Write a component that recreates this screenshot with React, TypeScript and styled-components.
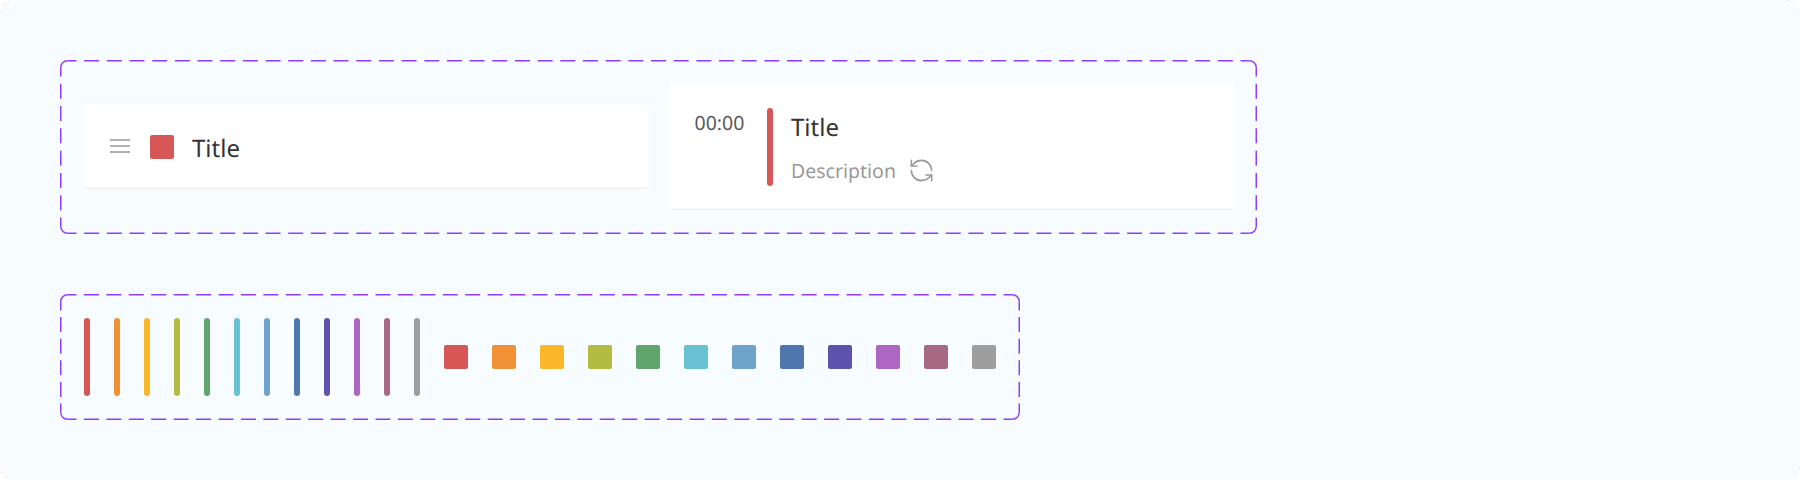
import styled, { createGlobalStyle } from "styled-components";
import { RefreshCcw } from "lucide-react";

const palette = [
  "#d75656",
  "#f09135",
  "#fab727",
  "#b4bb41",
  "#60a56c",
  "#67c1d3",
  "#70a3ca",
  "#5077ad",
  "#5f52ae",
  "#ad66c4",
  "#a86a82",
  "#9e9e9e",
];

const GlobalStyle = createGlobalStyle`
  html, body {
    margin: 0;
    padding: 0;
    background: #ffffff;
    font-family: "Noto Sans", "Open Sans", sans-serif;
    text-rendering: geometricPrecision;
  }
`;

const Page = styled.div`
  position: relative;
  box-sizing: border-box;
  width: 1800px;
  height: 480px;
  padding: 60px;
  display: flex;
  flex-direction: column;
  align-items: flex-start;
  gap: 60px;
  background: #f6fcff;
  border-radius: 15px;
  overflow: hidden;
`;

const Outline = styled.svg`
  position: absolute;
  inset: 0;
  width: 100%;
  height: 100%;
  pointer-events: none;
`;

const DashedBox = styled.div`
  position: relative;
  box-sizing: border-box;
  padding: 24px;
  display: flex;
  align-items: center;
  gap: 24px;
`;

const CardBox = styled(DashedBox)`
  width: 1197px;
`;

const SwatchBox = styled(DashedBox)`
  width: 960px;
`;

const Card = styled.div`
  flex: 1;
  box-sizing: border-box;
  display: flex;
  background: #ffffff;
  padding: 24px;
  box-shadow: inset 0 -1.5px 0 #f0f0f0;
`;

const RowCard = styled(Card)`
  align-items: center;
  height: 84px;
  gap: 18px;
`;

const EventCard = styled(Card)`
  height: 126px;
`;

const MenuIcon = styled.svg`
  display: block;
  width: 24px;
  height: 24px;
  flex: none;
`;

const Swatch = styled.div<{ $color: string }>`
  width: 24px;
  height: 24px;
  flex: none;
  border-radius: 2px;
  background: ${(p) => p.$color};
`;

const Bar = styled.div<{ $color: string }>`
  width: 6px;
  height: 78px;
  flex: none;
  border-radius: 3px;
  background: ${(p) => p.$color};
`;

const RowTitle = styled.div`
  font-size: 24px;
  line-height: 36px;
  color: #333333;
  padding-top: 4px;
`;

const EventTitle = styled(RowTitle)`
  padding-top: 1px;
  margin-top: 1px;
`;

const Time = styled.div`
  width: 72.5px;
  flex: none;
  font-size: 19.5px;
  line-height: 24px;
  padding-top: 3px;
  color: #595959;
`;

const Body = styled.div`
  display: flex;
  flex-direction: column;
  justify-content: space-between;
  margin-left: 18px;
`;

const Meta = styled.div`
  display: flex;
  align-items: center;
  gap: 12px;
  height: 30px;
  margin-bottom: 1px;
  font-size: 19.5px;
  color: #999999;
`;

const DASH = 15;
const GAP = 7.5;
const RADIUS = 7.5;
const EDGE = 0.75;

// every side fits its dashes between the corners, so each corner gets a full dash
const sideDash = (length: number) => {
  const run = length - 3;
  const period = (run - DASH) / Math.round((run - DASH) / (DASH + GAP));
  return `${DASH} ${period - DASH}`;
};

const Dashes = ({ w, h }: { w: number; h: number }) => {
  const right = w - EDGE;
  const bottom = h - EDGE;
  const line = { fill: "none", stroke: "#8f3dff", strokeWidth: 1.5 };
  const across = { ...line, strokeDasharray: sideDash(w), strokeDashoffset: 6 };
  const down = { ...line, strokeDasharray: sideDash(h), strokeDashoffset: 6 };
  return (
    <Outline>
      <path {...line} d={`M${EDGE} ${RADIUS}A${RADIUS - EDGE} ${RADIUS - EDGE} 0 0 1 ${RADIUS} ${EDGE}`} />
      <path {...line} d={`M${w - RADIUS} ${EDGE}A${RADIUS - EDGE} ${RADIUS - EDGE} 0 0 1 ${right} ${RADIUS}`} />
      <path {...line} d={`M${right} ${h - RADIUS}A${RADIUS - EDGE} ${RADIUS - EDGE} 0 0 1 ${w - RADIUS} ${bottom}`} />
      <path {...line} d={`M${RADIUS} ${bottom}A${RADIUS - EDGE} ${RADIUS - EDGE} 0 0 1 ${EDGE} ${h - RADIUS}`} />
      <path {...across} d={`M${RADIUS} ${EDGE}H${w - RADIUS}`} />
      <path {...across} d={`M${RADIUS} ${bottom}H${w - RADIUS}`} />
      <path {...down} d={`M${EDGE} ${RADIUS}V${h - RADIUS}`} />
      <path {...down} d={`M${right} ${RADIUS}V${h - RADIUS}`} />
    </Outline>
  );
};

// the frame's own dashed outline only peeks in at the rounded corners
const FrameEdge = () => (
  <Outline>
    <rect
      x="-1"
      y="-1"
      width="1802"
      height="482"
      rx="17"
      fill="none"
      stroke="#9747ff"
      strokeOpacity="0.5"
      strokeWidth="1.5"
      strokeDasharray="3 4"
    />
  </Outline>
);

export default function App() {
  return (
    <>
      <GlobalStyle />
      <Page>
        <FrameEdge />
        <CardBox>
          <Dashes w={1197} h={174} />
          <RowCard>
            <MenuIcon viewBox="0 0 24 24" fill="none" stroke="#999999" strokeWidth="1.5">
              <path d="M2 5h20M2 11h20M2 17h20" />
            </MenuIcon>
            <Swatch $color={palette[0]} />
            <RowTitle>Title</RowTitle>
          </RowCard>
          <EventCard>
            <Time>00:00</Time>
            <Bar $color={palette[0]} />
            <Body>
              <EventTitle>Title</EventTitle>
              <Meta>
                Description
                <RefreshCcw size={27} strokeWidth={1.4} color="#999999" />
              </Meta>
            </Body>
          </EventCard>
        </CardBox>
        <SwatchBox>
          <Dashes w={960} h={126} />
          {palette.map((color) => (
            <Bar key={color} $color={color} />
          ))}
          {palette.map((color) => (
            <Swatch key={color} $color={color} />
          ))}
        </SwatchBox>
      </Page>
    </>
  );
}
